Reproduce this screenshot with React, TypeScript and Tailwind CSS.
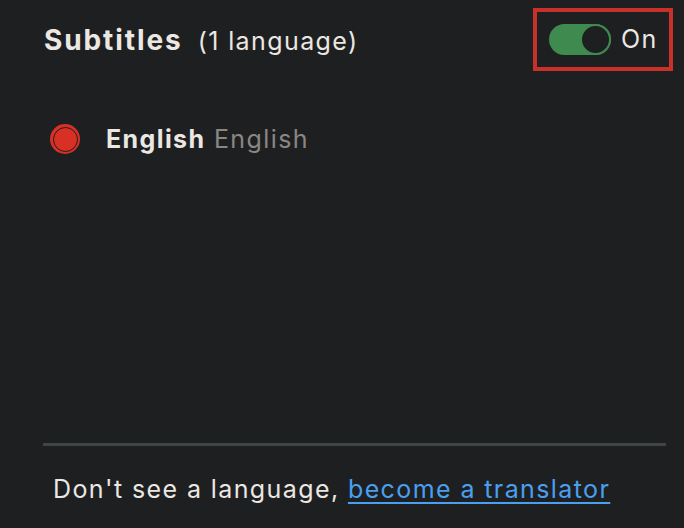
export default function App() {
  return (
    <div className="h-[528px] w-[684px] overflow-hidden bg-[#1e1f21] font-['Inter',sans-serif] tracking-[1.4px] text-[#ebe7e2]">
      {/* Header */}
      <div className="flex h-[71px] items-end justify-between pl-[44px] pr-[11px]">
        <div className="flex items-baseline self-center pt-[12px]">
          <span className="text-[28px] font-bold leading-[34px] tracking-[1.9px]">Subtitles</span>
          <span className="ml-[15px] text-[25px]">(1 language)</span>
        </div>
        <div className="flex h-[63px] w-[140px] items-center gap-[10px] border-4 border-[#c9302a] pl-[12px]">
          <div className="flex h-[31px] w-[62px] items-center justify-end rounded-full bg-[#3f8a4e]">
            <div className="h-[31px] w-[31px] rounded-full border-2 border-[#3f8a4e] bg-[#1e1f21]" />
          </div>
          <span className="text-[25px] leading-none">On</span>
        </div>
      </div>

      {/* Language list */}
      <div className="mt-[53px] flex h-[30px] items-center pl-[50px]">
        <div className="flex h-[30px] w-[30px] shrink-0 items-center justify-center rounded-full bg-[#d93025]">
          <div className="h-[25px] w-[25px] rounded-full border-[1.5px] border-[#1e1f21] bg-[#d93025]" />
        </div>
        <div className="ml-[26px] text-[25px] leading-[30px]">
          <span className="font-bold">English</span>{" "}
          <span className="text-[#8a8782]">English</span>
        </div>
      </div>

      {/* Divider */}
      <div className="ml-[43px] mt-[289px] h-[3px] w-[623px] bg-[#3f4446]" />

      {/* Footer */}
      <p className="ml-[53px] mt-[27px] text-[25px] leading-[32px]">
        Don't see a language,{" "}
        <a href="#" className="text-[#4a9fef] underline underline-offset-4">
          become a translator
        </a>
      </p>
    </div>
  )
}
